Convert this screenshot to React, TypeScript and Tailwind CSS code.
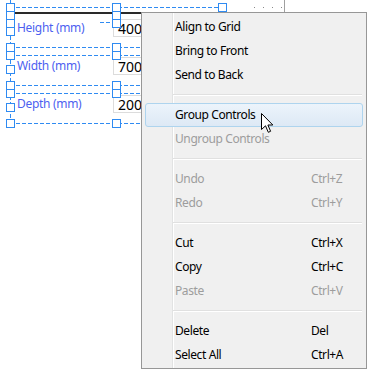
import React from "react";

type Item =
  | { sep: true }
  | { label: string; key?: string; disabled?: boolean; hot?: boolean; sep?: false };

const items: Item[] = [
  { label: "Align to Grid" },
  { label: "Bring to Front" },
  { label: "Send to Back" },
  { sep: true },
  { label: "Group Controls", hot: true },
  { label: "Ungroup Controls", disabled: true },
  { sep: true },
  { label: "Undo", key: "Ctrl+Z", disabled: true },
  { label: "Redo", key: "Ctrl+Y", disabled: true },
  { sep: true },
  { label: "Cut", key: "Ctrl+X" },
  { label: "Copy", key: "Ctrl+C" },
  { label: "Paste", key: "Ctrl+V", disabled: true },
  { sep: true },
  { label: "Delete", key: "Del" },
  { label: "Select All", key: "Ctrl+A" },
];

const rows = [
  { label: "Height (mm)", value: "400" },
  { label: "Width (mm)", value: "700" },
  { label: "Depth (mm)", value: "200" },
];

const BLUE = "#2f8bf2";

function Adorners() {
  const leftYs = [3, 11, 19, 27, 43, 51, 65, 81, 89, 103, 119];
  const midYs = [3, 11, 19, 43, 51, 81, 89, 119];
  const hLines: [number, number, number][] = [
    [10, 222, 7],
    [100, 112, 22],
    [10, 145, 47],
    [10, 145, 55],
    [10, 145, 85],
    [10, 145, 93],
    [10, 145, 123],
  ];
  const handle = (x: number, y: number, k: string) => (
    <rect key={k} x={x + 0.5} y={y + 0.5} width={8} height={8} fill="white" stroke={BLUE} strokeWidth={1} />
  );
  return (
    <svg className="absolute inset-0 pointer-events-none" width="368" height="140" viewBox="0 0 368 140" shapeRendering="crispEdges">
      <line x1={284.5} y1={0} x2={284.5} y2={12} stroke="#a0a0a0" />
      {[254, 263, 272, 281].map((x) => (
        <rect key={x} x={x} y={7} width={1} height={1} fill="#8a8a8a" />
      ))}
      <rect x={15} y={12} width={130} height={2} fill="#2a2a2a" />
      <line x1={10.5} y1={0} x2={10.5} y2={127} stroke={BLUE} strokeDasharray="4 2" />
      {hLines.map(([x1, x2, y], i) => (
        <line key={i} x1={x1} y1={y + 0.5} x2={x2} y2={y + 0.5} stroke={BLUE} strokeDasharray="4 2" />
      ))}
      {leftYs.map((y) => handle(6, y, "l" + y))}
      {midYs.map((y) => handle(112, y, "m" + y))}
      {handle(218, 3, "r")}
    </svg>
  );
}

export default function App() {
  return (
    <div
      className="relative w-[368px] h-[370px] bg-white overflow-hidden"
      style={{ fontFamily: '"Noto Sans", "Open Sans", sans-serif' }}
    >
      <div className="flex flex-col pt-[9px] pl-[17px]">
        {rows.map((r) => (
          <div key={r.label} className="flex items-center h-[38px]">
            <div className="w-[96px] text-[12px] tracking-[-0.3px] text-[#4d5ff0]">{r.label}</div>
            <div className="w-[60px] h-[18px] border border-[#dcdcdc] bg-white flex items-center pl-[4px] text-[14px] text-black">
              {r.value}
            </div>
          </div>
        ))}
      </div>

      <Adorners />

      <div className="absolute left-[141px] top-[12px] w-[226px] h-[357px] border border-[#979797] bg-[linear-gradient(90deg,#f0f0f0_0_30px,#e2e3e3_30px_31px,#ffffff_31px_32px,#f0f0f0_32px)] pt-[2px] px-[3px] text-[12px] tracking-[-0.4px]">
        <div className="flex flex-col">
          {items.map((it, i) =>
            it.sep ? (
              <div key={i} className="h-[16px] flex flex-col justify-center pl-[28px] pr-[1px]">
                <div className="h-px bg-[#e0e0e0]" />
                <div className="h-px bg-white" />
              </div>
            ) : (
              <div
                key={i}
                className={
                  "h-[24px] flex items-center " +
                  (it.hot
                    ? "border border-[#aed4ee] rounded-[3px] bg-gradient-to-b from-[#ecf4fb] to-[#dde9f5] pl-[29px] "
                    : "pl-[30px] ") +
                  (it.disabled ? "text-[#9d9d9d]" : "text-black")
                }
              >
                <span className="w-[136px]">{it.label}</span>
                {it.key && <span>{it.key}</span>}
              </div>
            )
          )}
        </div>
      </div>

      <svg className="absolute left-[261px] top-[113px]" width="13" height="21" viewBox="0 0 13 21">
        <path
          d="M0.5 0.5 L0.5 16.5 L4.5 12.8 L7.3 19.3 L9.6 18.3 L6.9 12 L11.8 12 Z"
          fill="white"
          stroke="black"
          strokeWidth="1"
        />
      </svg>
    </div>
  );
}
